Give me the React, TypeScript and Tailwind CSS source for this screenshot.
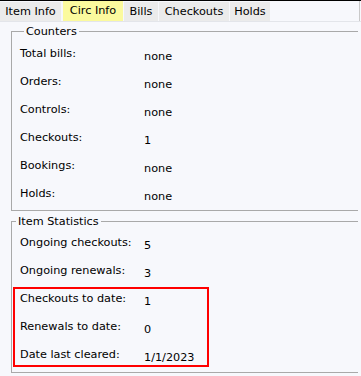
import React from 'react'

const tabs = [
  { name: 'Item Info', w: 'w-[61px]' },
  { name: 'Circ Info', w: 'w-[60px]', active: true },
  { name: 'Bills', w: 'w-[34px]' },
  { name: 'Checkouts', w: 'w-[70px]' },
  { name: 'Holds', w: 'w-[40px]' },
]

const counters = [
  ['Total bills:', 'none'],
  ['Orders:', 'none'],
  ['Controls:', 'none'],
  ['Checkouts:', '1'],
  ['Bookings:', 'none'],
  ['Holds:', 'none'],
]

const ongoing = [
  ['Ongoing checkouts:', '5'],
  ['Ongoing renewals:', '3'],
]

const toDate = [
  ['Checkouts to date:', '1'],
  ['Renewals to date:', '0'],
  ['Date last cleared:', '1/1/2023'],
]

function Row({ label, value }: { label: string; value: string }) {
  return (
    <div className="flex h-[28px] leading-[28px]">
      <div className="w-[124px] shrink-0">{label}</div>
      <div className="pt-[3px]">{value}</div>
    </div>
  )
}

export default function App() {
  return (
    <div className="w-[361px] h-[376px] overflow-hidden bg-[#f7f8fc] border-t border-black text-[11.25px] text-black font-['DejaVu_Sans',Verdana,sans-serif]">
      {/* Tab strip */}
      <div className="flex h-[21px] border-b border-[#e3e5ea] gap-[1px]">
        {tabs.map((t) =>
          t.active ? (
            <div
              key={t.name}
              className={`${t.w} ml-[1px] h-[20px] bg-[#fbfa9e] flex items-center justify-center leading-[13px] pb-[1px]`}
            >
              {t.name}
            </div>
          ) : (
            <div
              key={t.name}
              className={`${t.w} mt-[1px] h-[19px] bg-[#ebebeb] flex items-center justify-center leading-[13px]`}
            >
              {t.name}
            </div>
          )
        )}
        <div className="flex-1 mr-[1px] border-r border-[#c9c9c9]" />
      </div>

      {/* Panels */}
      <div className="pt-[3px] pl-[11px]">
        <div className="w-[347px] overflow-hidden">
          <fieldset className="w-[360px] border border-[#a9a9a9] pt-[2px] pb-[2px] pl-[8px]">
            <legend className="ml-[4px] px-[2px] leading-[13px]">Counters</legend>
            {counters.map(([l, v]) => (
              <Row key={l} label={l} value={v} />
            ))}
          </fieldset>

          <fieldset className="mt-[4px] w-[360px] border border-[#a9a9a9] pt-[1px] pb-[5px]">
            <legend className="ml-[4px] px-[2px] leading-[13px]">Item Statistics</legend>
            <div className="pl-[8px]">
              {ongoing.map(([l, v]) => (
                <Row key={l} label={l} value={v} />
              ))}
            </div>
            <div className="mt-[2px] ml-[1px] w-[196px] border-2 border-[#ff0000] pl-[5px] flex flex-col gap-[8px]">
              {toDate.map(([l, v]) => (
                <div key={l} className="flex h-[20px] leading-[20px]">
                  <div className="w-[124px] shrink-0">{l}</div>
                  <div className="pt-[3px]">{v}</div>
                </div>
              ))}
            </div>
          </fieldset>
        </div>
      </div>
    </div>
  )
}
